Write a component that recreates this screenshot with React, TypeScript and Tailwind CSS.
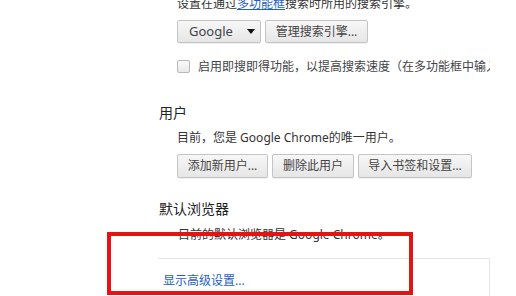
import * as React from "react";

const font = "font-['Noto_Sans','Noto_Sans_CJK_SC',sans-serif]";

const btnBase =
  "flex h-full items-center rounded-[2px] border border-[#c4c4c4] bg-gradient-to-b from-[#f7f7f7] to-[#e6e6e6] text-[12px] leading-none text-[#444] shadow-[0_1px_0_rgba(0,0,0,0.06)]";

function Btn({ children, className }: { children: React.ReactNode; className?: string }) {
  return (
    <button type="button" className={`${btnBase} justify-center ${className ?? ""}`}>
      {children}
    </button>
  );
}

export default function App() {
  return (
    <div className={`relative h-[296px] w-[516px] overflow-hidden bg-white ${font} text-[#333]`}>
      <div className="flex flex-col pl-[159px]">
        {/* search engine section */}
        <div className="flex flex-col pl-[18px]">
          <p className="-mt-[4px] h-[16px] whitespace-nowrap text-[12px] leading-[16px]">
            设置在通过<span className="text-[#1f5fbf] underline">多功能框</span>搜索时所用的搜索引擎。
          </p>
          <div className="mt-[8px] flex h-[23px] gap-[4px]">
            <div className={`${btnBase} w-[84px] justify-between pl-[11px] pr-[5px]`}>
              <span className="text-[13px]">Google</span>
              <span className="h-0 w-0 border-x-[4px] border-t-[5px] border-x-transparent border-t-[#111]" />
            </div>
            <Btn className="w-[103px]">管理搜索引擎...</Btn>
          </div>
          <div className="mt-[17px] flex h-[13px] items-center gap-[8px]">
            <span className="h-[13px] w-[13px] shrink-0 rounded-[2px] border border-[#b8b8b8] bg-gradient-to-b from-[#fafafa] to-[#e8e8e8]" />
            <span className="w-[292px] overflow-hidden whitespace-nowrap text-[12px] leading-[14px] text-[#444]">
              启用即搜即得功能，以提高搜索速度（在多功能框中输入
            </span>
          </div>
        </div>

        {/* users */}
        <h3 className="mt-[30px] h-[20px] text-[14px] leading-[20px] text-[#222]">用户</h3>
        <div className="flex flex-col pl-[18px]">
          <p className="mt-[7px] h-[16px] text-[12px] leading-[16px]">目前，您是 Google Chrome的唯一用户。</p>
          <div className="mt-[8px] flex h-[24px] gap-[4px]">
            <Btn className="w-[91px]">添加新用户...</Btn>
            <Btn className="w-[82px]">删除此用户</Btn>
            <Btn className="w-[114px]">导入书签和设置...</Btn>
          </div>
        </div>

        {/* default browser */}
        <h3 className="mt-[21px] h-[20px] text-[14px] leading-[20px] text-[#222]">默认浏览器</h3>
        <p className="mt-[8px] h-[16px] pl-[19px] text-[12px] leading-[16px]">目前的默认浏览器是 Google Chrome。</p>

        {/* advanced footer */}
        <div className="-ml-[1px] mt-[15px] h-[40px] w-[332px] border-r border-t border-[#e6e6e6] pl-[5px] pt-[8px]">
          <a className="text-[12px] leading-[16px] text-[#1f5fbf]">显示高级设置...</a>
        </div>
      </div>

      {/* annotation */}
      <div className="absolute left-[107px] top-[232px] h-[63px] w-[306px] border-4 border-[#e41414]" />
    </div>
  );
}
